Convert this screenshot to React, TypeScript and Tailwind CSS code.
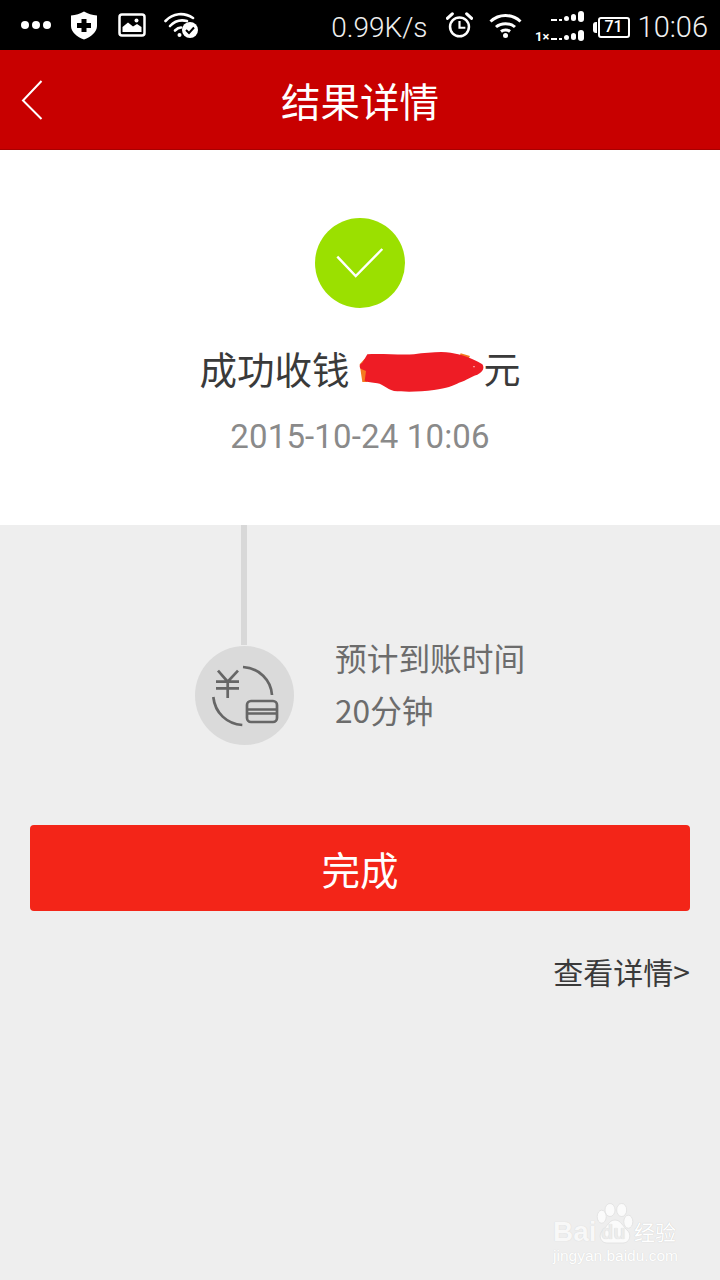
const CJK = "font-['Noto_Sans_CJK_SC','Noto_Sans',sans-serif]";

function StatusBar() {
  return (
    <div className="flex h-[50px] items-center bg-black pl-[21px] pr-[12px] text-white">
      {/* left icons */}
      <div className="flex items-center gap-[3px]">
        <span className="size-[8px] rounded-full bg-white" />
        <span className="size-[8px] rounded-full bg-white" />
        <span className="size-[8px] rounded-full bg-white" />
      </div>
      <svg className="ml-[19px]" width="28" height="29" viewBox="0 0 28 29">
        <path fill="#fff" d="M14 0.500 C18 3 22 4 27 4.500 V15 C27 21 21 26 14 28.500 C7 26 1 21 1 15 V4.500 C6 4 10 3 14 0.500Z" />
        <path fill="#000" d="M11.500 8 h5 v4 h4.500 v5 h-4.500 v4 h-5 v-4 h-4.500 v-5 h4.500z" />
      </svg>
      <svg className="ml-[20px]" width="28" height="24" viewBox="0 0 28 24">
        <rect x="1.500" y="1.500" width="25" height="21" rx="2.500" fill="none" stroke="#fff" strokeWidth="2.500" />
        <path fill="#fff" d="M4.500 19 V14 L10 9.500 L15 13.500 L19 11 L23.500 14 V19Z" />
        <circle cx="18.500" cy="7.500" r="2" fill="#fff" />
      </svg>
      <svg className="ml-[18px]" width="35" height="26" viewBox="0 0 35 26">
        <g fill="none" stroke="#fff" strokeWidth="2.600" strokeLinecap="round">
          <path d="M1.500 9 C9 1 20 0 29 6" />
          <path d="M6 14 C11 8.500 17 7.500 23 9" />
          <path d="M11 18.500 C13 16.500 15 15.500 17 15.500" />
        </g>
        <circle cx="15.500" cy="23" r="2" fill="#fff" />
        <circle cx="26" cy="18" r="8" fill="#fff" />
        <path d="M22 18 L25 21 L30 15.500" fill="none" stroke="#000" strokeWidth="2" />
      </svg>

      {/* right side */}
      <span className="mt-[5px] ml-auto font-['Roboto',sans-serif] text-[28px] leading-none font-light text-[#f0f0f0]">0.99K/s</span>
      <svg className="ml-[18px]" width="27" height="27" viewBox="0 0 30 30">
        <circle cx="15" cy="16.500" r="10.500" fill="none" stroke="#fff" strokeWidth="2.800" />
        <path d="M15 10 V17.500 H21.500" fill="none" stroke="#fff" strokeWidth="2.400" />
        <path d="M1.500 7 L7 2 M28.500 7 L23 2" stroke="#fff" strokeWidth="3.500" strokeLinecap="round" />
      </svg>
      <svg className="ml-[16px]" width="33" height="25" viewBox="0 0 33 25">
        <g fill="none" stroke="#fff" strokeWidth="3">
          <path d="M1.500 8.500 C10 0.500 23 0.500 31.500 8.500" />
          <path d="M7 14 C12 9.500 21 9.500 26 14" />
          <path d="M12 18.500 C14.500 16.500 18.500 16.500 21 18.500" />
        </g>
        <circle cx="16.500" cy="22.500" r="2.500" fill="#fff" />
      </svg>
      <svg className="mt-[4px] ml-[13px]" width="50" height="32" viewBox="0 0 50 32">
        <g fill="#fff">
          <rect x="16" y="8" width="6" height="2" />
          <rect x="24" y="8" width="3" height="2" />
          <rect x="29" y="5" width="5" height="5" rx="2.500" />
          <rect x="36" y="3" width="5" height="7" rx="2.500" />
          <rect x="43" y="0" width="6" height="11" rx="3" />
          <rect x="16" y="27" width="6" height="2" />
          <rect x="24" y="27" width="3" height="2" />
          <rect x="29" y="24" width="5" height="5" rx="2.500" />
          <rect x="36" y="22" width="5" height="7" rx="2.500" />
          <rect x="43" y="19" width="6" height="11" rx="3" />
        </g>
        <text x="0" y="30" fontSize="13" fontWeight="700" fill="#fff" fontFamily="Roboto, sans-serif">1×</text>
      </svg>
      <div className="mt-[4px] ml-[8px] flex items-center">
        <span className="h-[11px] w-[4px] rounded-l-[3px] bg-white" />
        <div className="ml-[1px] flex h-[21px] w-[32px] items-center justify-center rounded-[3px] border-[2.500px] border-white font-['Roboto',sans-serif] text-[16px] leading-none font-medium">
          71
        </div>
      </div>
      <span className="mt-[5px] ml-[8px] font-['Roboto',sans-serif] text-[29px] leading-none font-light text-[#f0f0f0]">10:06</span>
    </div>
  );
}

function Header() {
  return (
    <div className="relative flex h-[100px] items-center justify-center border-b border-[#a80000] bg-[#c80000]">
      <svg className="absolute top-[30px] left-[21px]" width="22" height="40" viewBox="0 0 22 40">
        <path d="M20.500 1 L2 20.500 L20.500 39" fill="none" stroke="#fff" strokeWidth="2" />
      </svg>
      <h1 className={`${CJK} text-[39.500px] leading-none font-normal text-white`}>结果详情</h1>
    </div>
  );
}

function RedactBlob() {
  return (
    <svg className="mt-[7px] ml-[9px] shrink-0" width="125" height="40" viewBox="535 458 375 120">
      <path fill="#f47a20" d="M537 495 L552 478 L565 490 L560 548 L545 548Z M840 462 L868 470 L860 485 L835 475Z" />
      <path
        fill="#ee1c25"
        d="M545 490 L560 465 C600 462 660 468 700 465 C740 460 780 456 810 460 C840 466 870 472 905 495 C912 505 908 518 890 526 C870 532 860 542 835 550 C815 560 800 566 760 572 C720 578 670 578 640 575 C615 568 610 556 590 552 C575 550 560 548 552 545 L556 515 L540 508 C534 500 538 494 545 490Z"
      />
      <circle cx="880" cy="502" r="2" fill="#fff" />
    </svg>
  );
}

function ResultCard() {
  return (
    <div className="flex h-[375px] flex-col items-center bg-white pt-[68px]">
      <div className="flex size-[90px] items-center justify-center rounded-full bg-[#9be000]">
        <svg width="48" height="30" viewBox="0 0 48 30">
          <path d="M1.300 8.700 L19.700 28 L46.300 1" fill="none" stroke="#fff" strokeWidth="2.400" />
        </svg>
      </div>
      <div className={`${CJK} mt-[37px] flex h-[46px] items-center text-[37.500px] leading-none text-[#3a3a3a]`}>
        <span>成功收钱</span>
        <RedactBlob />
        <span className="text-[37px]">元</span>
      </div>
      <p className="mt-[26px] font-['Roboto',sans-serif] text-[33px] leading-[40px] tracking-[0.15px] text-[#8a8a8a]">2015-10-24 10:06</p>
    </div>
  );
}

function ArrivalIcon() {
  return (
    <svg width="99" height="99" viewBox="0 0 99 99">
      <circle cx="49.500" cy="49.500" r="49.500" fill="#dadada" />
      <g fill="none" stroke="#666" strokeWidth="2.700">
        <path d="M23 24.700 L32.700 35.700 L43 24.700 M21 35.700 H44 M21 42.300 H44 M32.700 35.700 V52" />
        <path d="M48 21 C64 22 76 34 77 49" />
        <path d="M18.300 51 C20 67 32 78 47.300 79" />
        <rect x="52" y="55" width="30" height="21" rx="4" strokeWidth="2.700" />
        <path d="M52 63.500 H82 M52 67.500 H82" strokeWidth="2.400" />
      </g>
    </svg>
  );
}

function Watermark() {
  return (
    <div className="absolute top-[1200px] left-[552px] h-[70px] w-[130px] text-white">
      <svg className="absolute top-[3px] left-[44px]" width="38" height="41" viewBox="0 0 38 41">
        <g fill="#fbfbfb" stroke="#dcdcdc" strokeWidth="0.700">
          <ellipse cx="5.700" cy="13.700" rx="4.500" ry="6.500" />
          <ellipse cx="14" cy="7" rx="5" ry="6.500" />
          <ellipse cx="25.700" cy="7" rx="5" ry="6.500" />
          <ellipse cx="32.300" cy="18.700" rx="4.500" ry="6.500" />
          <path d="M19 17 C25 17 27 24 32 28 C36 33 33 40 27 40 H11 C5 40 2 33 6 28 C11 24 13 17 19 17Z" />
        </g>
      </svg>
      <span className="absolute top-[16px] left-[1px] font-['Liberation_Sans',sans-serif] text-[28px] leading-[32px] font-bold text-[#f8f8f8] [text-shadow:0_0_1px_#cfcfcf]">Bai</span>
      <span className="absolute top-[21px] left-[49px] font-['Liberation_Sans',sans-serif] text-[20px] leading-[22px] font-bold text-[#ececec] [text-shadow:0_0_1px_#cfcfcf]">du</span>
      <span className={`${CJK} absolute top-[18px] left-[82px] text-[21px] leading-[26px] whitespace-nowrap text-white [text-shadow:0_0_1px_#c0c0c0]`}>经验</span>
      <span className="absolute top-[47px] left-[1px] font-['Liberation_Sans',sans-serif] text-[15.500px] leading-[18px] whitespace-nowrap text-white [text-shadow:0_0_1px_#cfcfcf]">jingyan.baidu.com</span>
    </div>
  );
}

export default function App() {
  return (
    <div className="relative h-[1280px] w-[720px] overflow-hidden bg-[#eeeeee]">
      <StatusBar />
      <Header />
      <ResultCard />

      {/* timeline */}
      <div className="flex h-[220px] pl-[195px]">
        <div className="flex flex-col items-center">
          <div className="h-[120px] w-[6px] -translate-x-[1px] bg-[#d8d8d8]" />
          <div className="mt-[1px]">
            <ArrivalIcon />
          </div>
        </div>
        <div className={`${CJK} ml-[41px] pt-[106px] text-[31.700px] leading-[52px] text-[#6c6c6c]`}>
          <p>预计到账时间</p>
          <p>20分钟</p>
        </div>
      </div>

      <div className="px-[30px] pt-[80px]">
        <button className={`${CJK} flex h-[86px] w-full items-center justify-center rounded-[4px] bg-[#f32518] text-[38.500px] leading-none text-white`}>
          完成
        </button>
        <p className={`${CJK} mt-[40px] text-right text-[30px] leading-[40px] text-[#3a3a3a]`}>查看详情&gt;</p>
      </div>

      <Watermark />
    </div>
  );
}
